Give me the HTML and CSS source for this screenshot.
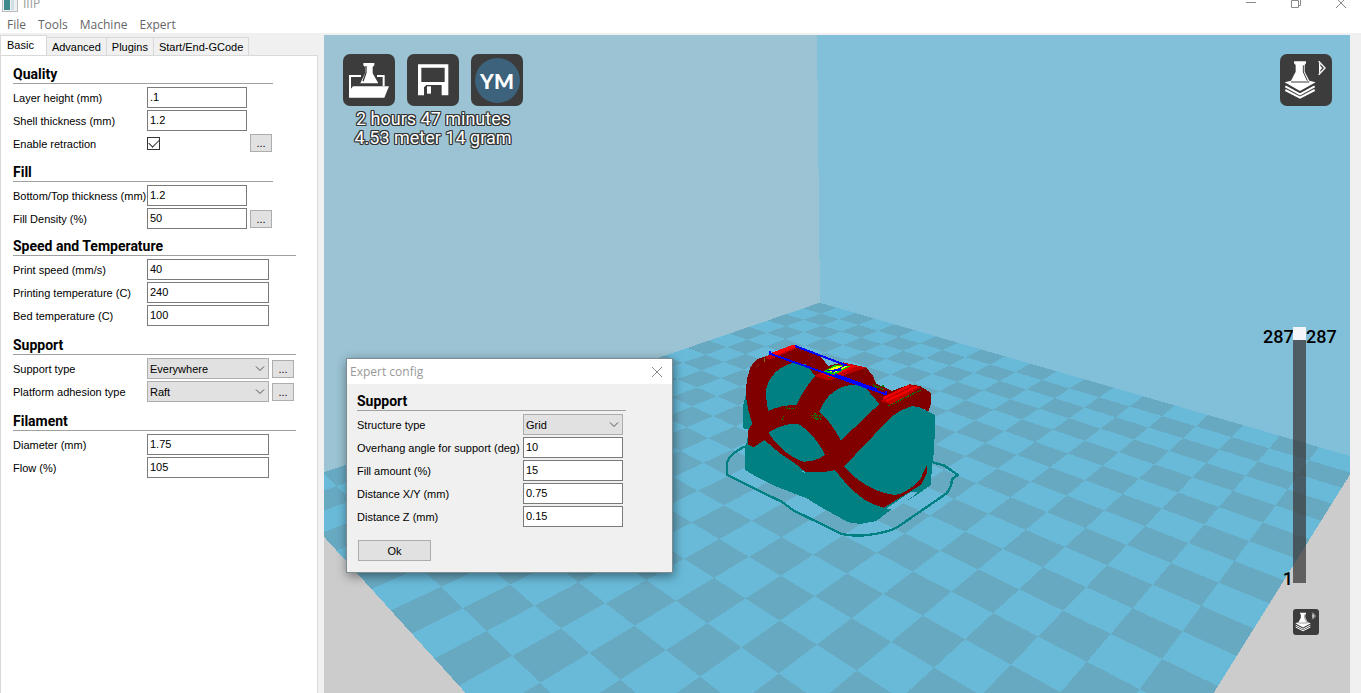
FILE: index.html
```html
<!DOCTYPE html>
<html lang="en">
<head>
<meta charset="utf-8">
<title>IIIP</title>
<link rel="stylesheet" href="styles.css">
</head>
<body>
<header class="title-bar">
  <svg class="app-icon" width="16" height="16" viewBox="0 0 16 16" aria-hidden="true">
    <rect x=".5" y=".5" width="15" height="15" fill="#eef1f3" stroke="#b9bcbe"/>
    <rect x="2" y="3" width="6" height="11" fill="#3f8a8c"/>
    <rect x="9" y="3" width="3" height="11" fill="#cfe0e4"/>
  </svg>
  <span class="app-title">IIIP</span>
  <div class="window-controls">
    <button type="button" aria-label="Minimize"><svg width="12" height="12" viewBox="0 0 12 12"><path d="M1 4.500H11"/></svg></button>
    <button type="button" aria-label="Restore"><svg width="12" height="12" viewBox="0 0 12 12"><path d="M1.500 2.500H8.500V9.500H1.500ZM3.500 2.500V.5H10.500V7.500H8.500"/></svg></button>
    <button type="button" aria-label="Close"><svg width="12" height="12" viewBox="0 0 12 12"><path d="M1 0 11 10M11 0 1 10"/></svg></button>
  </div>
</header>
<nav class="menu-bar">
  <button type="button">File</button>
  <button type="button">Tools</button>
  <button type="button">Machine</button>
  <button type="button">Expert</button>
</nav>
<main class="workspace">
  <aside class="sidebar">
    <div class="tabs" role="tablist">
      <button type="button" role="tab" class="tab tab-active" aria-selected="true">Basic</button>
      <button type="button" role="tab" class="tab">Advanced</button>
      <button type="button" role="tab" class="tab">Plugins</button>
      <button type="button" role="tab" class="tab">Start/End-GCode</button>
    </div>
    <form class="settings">
      <section class="group">
        <h2>Quality</h2>
        <div class="row"><label for="layer">Layer height (mm)</label><input id="layer" type="text" value=".1"></div>
        <div class="row"><label for="shell">Shell thickness (mm)</label><input id="shell" type="text" value="1.2"></div>
        <div class="row row-check"><label for="retract">Enable retraction</label><span class="check-cell"><input id="retract" type="checkbox" checked></span><button type="button" class="more" aria-label="Retraction settings">...</button></div>
      </section>
      <section class="group">
        <h2>Fill</h2>
        <div class="row"><label for="topbottom">Bottom/Top thickness (mm)</label><input id="topbottom" type="text" value="1.2"></div>
        <div class="row"><label for="density">Fill Density (%)</label><input id="density" type="text" value="50"><button type="button" class="more" aria-label="Fill settings">...</button></div>
      </section>
      <section class="group group-wide group-tight">
        <h2>Speed and Temperature</h2>
        <div class="row"><label for="speed">Print speed (mm/s)</label><input id="speed" type="text" value="40"></div>
        <div class="row"><label for="temp">Printing temperature (C)</label><input id="temp" type="text" value="240"></div>
        <div class="row"><label for="bed">Bed temperature (C)</label><input id="bed" type="text" value="100"></div>
      </section>
      <section class="group group-wide">
        <h2>Support</h2>
        <div class="row"><label for="support">Support type</label><span class="select"><select id="support"><option>Everywhere</option></select><svg width="10" height="6" viewBox="0 0 10 6"><path d="M1 .5 5 4.500 9 .5"/></svg></span><button type="button" class="more" aria-label="Support settings">...</button></div>
        <div class="row"><label for="adhesion">Platform adhesion type</label><span class="select"><select id="adhesion"><option>Raft</option></select><svg width="10" height="6" viewBox="0 0 10 6"><path d="M1 .5 5 4.500 9 .5"/></svg></span><button type="button" class="more" aria-label="Adhesion settings">...</button></div>
      </section>
      <section class="group group-wide">
        <h2>Filament</h2>
        <div class="row"><label for="diameter">Diameter (mm)</label><input id="diameter" type="text" value="1.75"></div>
        <div class="row"><label for="flow">Flow (%)</label><input id="flow" type="text" value="105"></div>
      </section>
    </form>
  </aside>

  <section class="viewport" aria-label="3D view">
    <svg class="scene" viewBox="324 35 1026 658" preserveAspectRatio="xMidYMid slice" shape-rendering="crispEdges" aria-hidden="true">
      <rect x="324" y="35" width="1026" height="658" fill="#cccccc"/>
      <path fill="#9bc3d3" d="M324 35H817L820 303 324 473Z"/>
      <path fill="#82bfd8" d="M817 35H1350V457L820 303Z"/>
      <path id="floor" fill="#69bad9"/>
      <path id="tiles" fill="#68a9c2"/>
      <g transform="translate(720 330) scale(.3333)">
        <path fill="none" stroke="#008080" stroke-width="7" d="M90 346C62 350 20 380 20 405L22 435Q100 475 185 515L220 541 365 612Q400 620 445 615 500 608 530 593L600 545 680 490Q695 470 696 448L714 435 673 407 632 395"/>
        <path fill="#008080" d="M77 195 68 232 70 295 88 300 75 360V420L100 435 165 468 260 505 300 530 385 577 420 582 470 573 505 545 595 492 632 465 637 400 643 360 645 255 625 245 580 220 480 220 400 150 240 90 120 110Z"/>
        <path fill="#69bad9" d="M500 535 570 487 592 486 585 495 520 540Z"/>
        <path fill="#800000" d="M100 352 85 344V300L97 280 86 245 78 200 80 150 92 110 110 88 135 80 222 43 240 52 300 78 325 108 370 97 412 107 440 115 458 135 468 160 515 183 570 163 600 168 632 188 633 220 625 245Q600 228 575 229 530 242 500 275L372 410Q440 485 525 495 560 490 600 450L622 402 620 430 603 465 545 500 492 533Q465 527 435 510 390 480 345 420 310 430 255 425L225 400 180 370 133 330Z"/>
        <g fill="#008080">
          <path d="M145 243Q135 200 140 170 160 115 215 100L258 102 285 138Q250 180 230 225 180 225 145 243Z"/>
          <path d="M298 245Q320 190 365 172 410 155 440 177L478 222 362 332Q340 283 298 245Z"/>
          <path d="M145 308Q200 274 240 284 290 320 315 375 285 396 250 395 190 375 145 308Z"/>
        </g>
        <path fill="#69bad9" d="M305 82 345 98 325 107ZM250 422 258 430 246 426Z"/>
        <path fill="#c00000" d="M135 80 222 43 240 51 148 90Z"/>
        <path fill="#ff0000" d="M150 70 222 43 232 49 165 78Z"/>
        <path fill="#c00000" d="M283 138 370 97 440 113 325 152Z"/>
        <path fill="#f00000" d="M300 128 370 99 412 109 330 143Z"/>
        <path fill="#c00000" d="M480 213 570 163 602 172 515 224Z"/>
        <path stroke="#f00000" stroke-width="7" d="M490 205 568 167M500 213 590 170"/>
        <path fill="#00d000" d="M308 126 345 105 392 108 345 134Z"/>
        <path fill="#ffff00" d="M320 122 350 108 382 109 345 128Z"/>
        <path stroke="#0000ff" stroke-width="4" d="M322 121 362 120M335 127 372 108"/>
        <path stroke="#0a7a0a" stroke-width="4" stroke-dasharray="5 3" d="M505 228 602 180M458 164 490 180M462 171 492 168M272 256 305 258M275 263 302 267M285 250 292 272M197 234 225 236M186 268 192 260M324 144 330 140"/>
        <path stroke="#808000" stroke-width="5" d="M134 84V96"/>
        <path fill="none" stroke="#0000ff" stroke-width="6" d="M150 63V71L495 192M225 48 382 107M345 133 470 178M497 184V194"/>
      </g>
    </svg>

    <div class="toolbar">
      <div class="tool-group">
        <div class="tools">
          <button type="button" class="tool" aria-label="Load">
            <svg viewBox="0 0 156 156"><path fill="none" stroke="#fff" stroke-width="6" d="M21 128V66H54M102 66H122V96"/><path fill="#fff" d="M18 131V112L30 97H138L124 131ZM61 27H94V34L89 39V58L106 88H52L66 58V39L61 34Z"/><path stroke="#3c3c3c" stroke-width="4" d="M69 36V56L60 82" fill="none"/></svg>
          </button>
          <button type="button" class="tool" aria-label="Save toolpath">
            <svg viewBox="0 0 156 156"><path fill="#fff" fill-rule="evenodd" d="M33 31H124V124H33ZM43 41V84H113V41ZM58 93 51 100V124H104V93Z"/><path fill="#fff" d="M60 97H72V119H60Z"/></svg>
          </button>
          <button type="button" class="tool tool-ym" aria-label="Share on YouMagine"><span class="ym">YM</span></button>
        </div>
        <p class="estimate">2 hours 47 minutes<br>4.53 meter 14 gram</p>
      </div>
      <button type="button" class="tool" aria-label="View mode">
        <svg viewBox="0 0 156 156"><g id="layers-icon"><path fill="#fff" d="M42 22H78V28L74 33V53L88 80 107 85 60 111 14 85 33 80 47 53V33L42 28Z"/><path fill="none" stroke="#fff" stroke-width="6" d="M16 97 60 121 104 97M16 108 60 131 104 108"/><path fill="none" stroke="#3c3c3c" stroke-width="3" d="M70 34V54L82 80M33 84H88"/><path fill="none" stroke="#fff" stroke-width="4" d="M116 22 135 42 116 62M119 28V56"/><path fill="#fff" d="M118 33 127 42 118 51Z"/></g></svg>
      </button>
    </div>

    <div class="layer-panel">
      <div class="layer-slider">
        <output for="layer-range" class="layer-from">287</output>
        <input id="layer-range" type="range" min="1" max="287" value="287" aria-label="Layer">
        <output for="layer-range" class="layer-to">287</output>
        <span class="layer-min">1</span>
      </div>
      <button type="button" class="tool tool-small" aria-label="Layer view"><svg viewBox="0 0 156 156"><use href="#layers-icon"/></svg></button>
    </div>

    <section class="dialog" role="dialog" aria-labelledby="dialog-title">
      <header class="dialog-bar">
        <span id="dialog-title">Expert config</span>
        <button type="button" aria-label="Close dialog"><svg width="12" height="12" viewBox="0 0 12 12"><path d="M1 1 11 11M11 1 1 11"/></svg></button>
      </header>
      <form class="dialog-body">
        <h2>Support</h2>
        <div class="row"><label for="structure">Structure type</label><span class="select"><select id="structure"><option>Grid</option></select><svg width="10" height="6" viewBox="0 0 10 6"><path d="M1 .5 5 4.500 9 .5"/></svg></span></div>
        <div class="row"><label for="overhang">Overhang angle for support (deg)</label><input id="overhang" type="text" value="10"></div>
        <div class="row"><label for="amount">Fill amount (%)</label><input id="amount" type="text" value="15"></div>
        <div class="row"><label for="distxy">Distance X/Y (mm)</label><input id="distxy" type="text" value="0.75"></div>
        <div class="row"><label for="distz">Distance Z (mm)</label><input id="distz" type="text" value="0.15"></div>
        <button type="button" class="ok">Ok</button>
      </form>
    </section>
  </section>
</main>
<script src="floor.js"></script>
</body>
</html>
```
FILE: styles.css
```css
* { box-sizing: border-box; }

body {
  margin: 0;
  height: 100vh;
  display: flex;
  flex-direction: column;
  overflow: hidden;
  background: #fff;
  color: #000;
  font: 11px/16px "Liberation Sans", sans-serif;
}

button, input, select { font: inherit; color: inherit; margin: 0; }
h2, p { margin: 0; }

/* Window chrome */
.title-bar {
  display: flex;
  align-items: center;
  flex: none;
  height: 24px;
  margin-top: -8px;
  padding: 0 8px 0 2px;
  color: #999;
  font: 12px/16px "Open Sans", sans-serif;
}
.app-title { margin-left: 5px; }
.window-controls { display: flex; gap: 21px; margin-left: auto; }
.window-controls button, .dialog-bar button {
  display: grid;
  place-items: center;
  width: 24px;
  height: 20px;
  padding: 0;
  border: 0;
  background: none;
}
.window-controls svg, .dialog-bar svg { fill: none; stroke: #8a8a8a; }

.menu-bar {
  display: flex;
  flex: none;
  gap: 12px;
  height: 17px;
  padding-left: 7px;
}
.menu-bar button {
  padding: 0;
  border: 0;
  background: none;
  color: #666;
  font: 12px/17px "Open Sans", sans-serif;
}

.workspace {
  display: flex;
  flex: 1;
  min-height: 0;
  padding: 2px 11px 0 0;
  background: #f0f0f0;
}

/* Settings sidebar */
.sidebar {
  display: flex;
  flex-direction: column;
  flex: none;
  width: 318px;
  margin-right: 6px;
}
.tabs { display: flex; align-items: flex-end; height: 20px; }
.tab {
  height: 18px;
  padding: 1px 5px 0;
  border: 1px solid #d9d9d9;
  border-width: 1px 1px 0 0;
  background: #f0f0f0;
  line-height: 16px;
}
.tab-active {
  height: 21px;
  margin-bottom: -1px;
  padding: 0 12px 2px 6px;
  border-left-width: 1px;
  background: #fff;
}
.settings {
  flex: 1;
  padding: 11px 12px;
  border: 1px solid #d9d9d9;
  border-bottom: 0;
  background: #fff;
}
.group { width: 260px; }
.group-wide { width: 283px; }
.group + .group { margin-top: 12px; }
.group + .group-tight { margin-top: 10px; }

h2 {
  height: 17px;
  margin-bottom: 3px;
  border-bottom: 1px solid #a0a0a0;
  font: bold 14px/15px Roboto, sans-serif;
}

.row {
  display: grid;
  grid-template-columns: 134px 100px 22px;
  column-gap: 0;
  align-items: center;
  height: 21px;
}
.row + .row { margin-top: 2px; }
.row-check { height: 20px; }
.group-wide .row { grid-template-columns: 134px 122px 22px; }
.row label { padding-top: 1px; white-space: nowrap; }
.row > .more { margin-left: 3px; }

input[type="text"], select {
  width: 100%;
  height: 21px;
  padding: 0 2px 1px;
  border: 1px solid #7a7a7a;
  border-radius: 0;
  background: #fff;
  outline: 0;
}
select {
  appearance: none;
  padding: 1px 2px 0;
  border-color: #adadad;
  background: #e1e1e1;
}
.select { position: relative; }
.select svg {
  position: absolute;
  right: 4px;
  top: 8px;
  fill: none;
  stroke: #505050;
  pointer-events: none;
}
.check-cell { display: flex; }
input[type="checkbox"] {
  appearance: none;
  display: grid;
  place-items: center;
  width: 13px;
  height: 13px;
  border: 1px solid #333;
  background: #fff;
}
input[type="checkbox"]:checked::after {
  content: "";
  width: 9px;
  height: 5px;
  margin-bottom: 3px;
  border: solid #333;
  border-width: 0 0 1px 1px;
  rotate: -45deg;
}
.more, .ok {
  padding: 0;
  border: 1px solid #adadad;
  background: #e1e1e1;
}
.more { width: 22px; height: 18px; line-height: 14px; }

/* 3D view */
.viewport { position: relative; flex: 1; min-width: 0; overflow: hidden; }
.scene { position: absolute; inset: 0; width: 100%; height: 100%; }
.toolbar {
  position: relative;
  display: flex;
  justify-content: space-between;
  align-items: flex-start;
  padding: 19px 18px 0 19px;
}
.tools { display: flex; gap: 12px; }
.tool {
  width: 52px;
  height: 52px;
  padding: 0;
  border: 0;
  border-radius: 7px;
  background: #3c3c3c;
}
.tool svg { display: block; width: 100%; height: 100%; }
.tool-ym { display: grid; place-items: center; }
.ym {
  width: 45px;
  height: 45px;
  border-radius: 50%;
  background: #3d627c;
  color: #fff;
  font: 900 21px/45px Lato, sans-serif;
  text-align: center;
}
.tool-small { width: 26px; height: 26px; border-radius: 3px; }
.estimate {
  margin-top: 3px;
  color: #fff;
  font: 18px/19px Roboto, sans-serif;
  text-align: center;
  text-shadow: 1px 0 #333, -1px 0 #333, 0 1px #333, 0 -1px #333, 1px 1px #333, -1px -1px #333, 1px -1px #333, -1px 1px #333;
}

.layer-panel {
  position: absolute;
  right: 14px;
  bottom: 58px;
  display: grid;
  justify-items: center;
  row-gap: 26px;
}
.layer-slider {
  display: grid;
  grid-template-columns: 30px 13px 30px;
  grid-template-rows: 20px 1fr 14px;
  height: 256px;
  font: 500 18px/20px Roboto, sans-serif;
}
.layer-from, .layer-min { grid-column: 1; text-align: right; }
.layer-from { grid-row: 1; }
.layer-min { grid-row: 3; }
.layer-to { grid-column: 3; grid-row: 1; }
.layer-slider input {
  appearance: none;
  grid-column: 2;
  grid-row: 1 / -1;
  width: 13px;
  height: 100%;
  writing-mode: vertical-lr;
  direction: rtl;
  background: rgba(60, 60, 60, .75);
}
.layer-slider input::-webkit-slider-thumb {
  appearance: none;
  width: 13px;
  height: 13px;
  border: 0;
  background: #f3f5f8;
}
.layer-panel .tool-small { margin-left: 13px; }

/* Expert config window */
.dialog {
  position: absolute;
  left: 22px;
  top: 323px;
  width: 327px;
  border: 1px solid #7b8c93;
  background: #f0f0f0;
  box-shadow: 1px 3px 10px rgba(0, 0, 0, .45);
}
.dialog-bar {
  display: flex;
  align-items: center;
  justify-content: space-between;
  height: 25px;
  padding: 0 3px;
  background: #fff;
  color: #999;
  font: 12px/16px "Open Sans", sans-serif;
}
.dialog-body { padding: 10px 46px 11px 10px; }
.dialog-body .row { grid-template-columns: 166px 100px; }
.ok { display: block; width: 73px; height: 21px; margin: 13px 0 0 1px; }
```
FILE: floor.js
```js
// Projects the 20 x 20 print bed into the scene's perspective.
const SIZE = 20;

function project(u, v) {
  const w = 1 - 0.01801 * u - 0.01999 * v;
  const x = (819.7 + 2.516 * u - 32.6 * v) / w;
  const y = (302.7 - 0.4539 * u - 0.5037 * v) / w;
  return x.toFixed(2) + " " + y.toFixed(2);
}

function quad(u, v, n) {
  return "M" + [project(u, v), project(u + n, v), project(u + n, v + n), project(u, v + n)].join("L") + "Z";
}

let tiles = "";
for (let u = 0; u < SIZE; u++) {
  for (let v = u % 2; v < SIZE; v += 2) {
    tiles += quad(u, v, 1);
  }
}
document.getElementById("floor").setAttribute("d", quad(0, 0, SIZE));
document.getElementById("tiles").setAttribute("d", tiles);
```
